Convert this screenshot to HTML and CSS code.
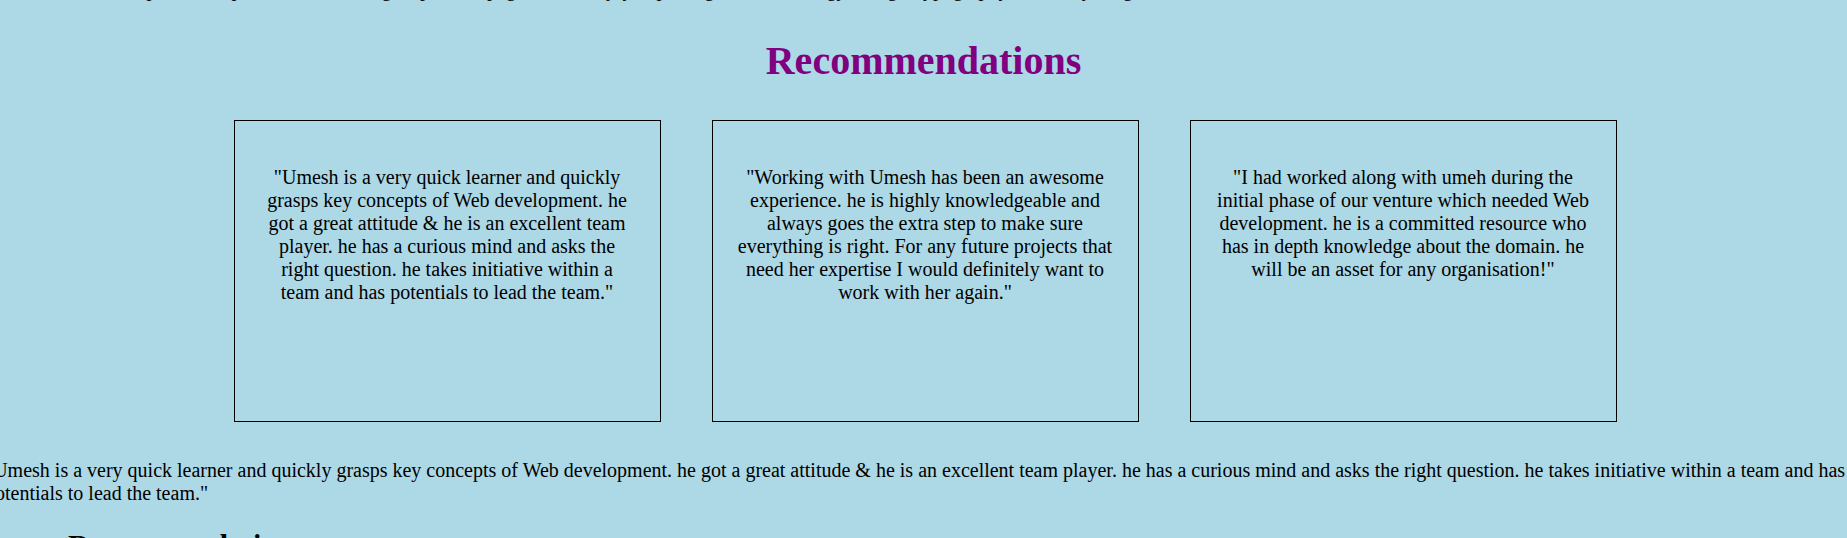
FILE: index.html
```html
<!DOCTYPE html>
<html lang="en">
<head>
<meta charset="utf-8">
<title>Recommendations</title>
<link rel="stylesheet" href="styles.css">
</head>
<body>
<p class="intro">I am a web developer with a passion for building responsive pages, and I enjoy exploring new technology, design, typography and everything in between.</p>
<h2 class="title">Recommendations</h2>
<div class="cards">
  <div class="card"><p>"Umesh is a very quick learner and quickly grasps key concepts of Web development. he got a great attitude &amp; he is an excellent team player. he has a curious mind and asks the right question. he takes initiative within a team and has potentials to lead the team."</p></div>
  <div class="card"><p>"Working with Umesh has been an awesome experience. he is highly knowledgeable and always goes the extra step to make sure everything is right. For any future projects that need her expertise I would definitely want to work with her again."</p></div>
  <div class="card"><p>"I had worked along with umeh during the initial phase of our venture which needed Web development. he is a committed resource who has in depth knowledge about the domain. he will be an asset for any organisation!"</p></div>
</div>
<p class="quote-line">"Umesh is a very quick learner and quickly grasps key concepts of Web development. he got a great attitude &amp; he is an excellent team player. he has a curious mind and asks the right question. he takes initiative within a team and has potentials to lead the team."</p>
<h3 class="subtitle">Recommendations</h3>
</body>
</html>
```
FILE: styles.css
```css
html, body {
  margin: 0;
  padding: 0;
}
body {
  background: #add8e6;
  color: #000;
  font-family: "Liberation Serif", "Times New Roman", serif;
  font-size: 20px;
  line-height: 23px;
  overflow: hidden;
}
.intro {
  margin: -22px 0 0 0;
  white-space: nowrap;
}
.title {
  margin: 37px 0 0 0;
  text-align: center;
  color: #800080;
  font-size: 40px;
  line-height: 46px;
  font-weight: bold;
}
.cards {
  display: flex;
  justify-content: center;
  gap: 51px;
  margin-top: 36px;
  padding-left: 3px;
}
.card {
  box-sizing: border-box;
  width: 427px;
  height: 302px;
  border: 1px solid #000;
  padding: 45px 25px 0;
  text-align: center;
}
.card p {
  margin: 0;
}
.quote-line {
  margin: 37px 0 0 -15px;
  width: 1880px;
}
.subtitle {
  margin: 23px 0 0 68px;
  font-size: 30px;
  line-height: 34px;
  font-weight: bold;
}
```
